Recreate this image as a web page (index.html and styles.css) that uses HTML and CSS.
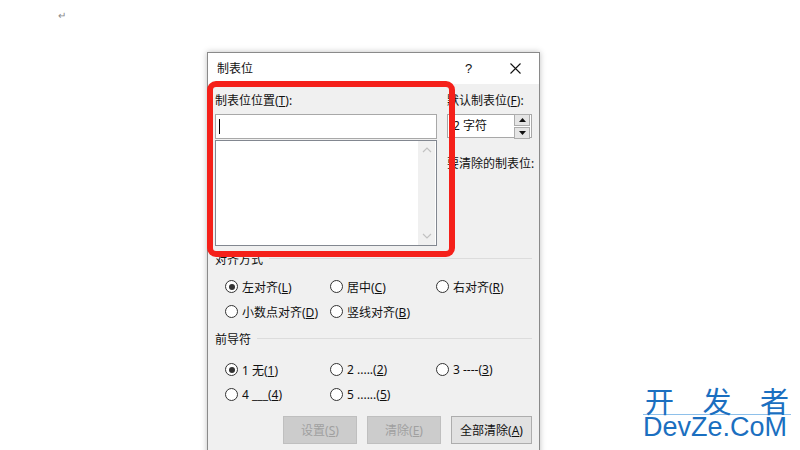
FILE: index.html
```html
<!DOCTYPE html>
<html lang="zh-CN">
<head>
  <meta charset="UTF-8" />
  <title>制表位</title>
  <link rel="stylesheet" href="styles.css">
</head>
<body>
  <div class="page">
    <span class="para-mark">↵</span>

    <div class="dialog">
      <div class="titlebar">
        <span class="title">制表位</span>
        <span class="help">?</span>
        <span class="close">
          <svg width="11" height="11" viewBox="0 0 11 11"><path d="M0.5 0.5 L10.5 10.5 M10.5 0.5 L0.5 10.5" stroke="#111" stroke-width="1.1"/></svg>
        </span>
      </div>

      <div class="content">
        <div class="top">
          <div class="col-left">
            <div class="label">制表位位置(<u>T</u>):</div>
            <div class="input"><span class="caret"></span></div>
            <div class="listbox">
              <div class="scroll">
                <svg width="10" height="6" viewBox="0 0 10 6"><path d="M1 5 L5 1 L9 5" fill="none" stroke="#c2c2c2" stroke-width="1.2"/></svg>
                <svg width="10" height="6" viewBox="0 0 10 6"><path d="M1 1 L5 5 L9 1" fill="none" stroke="#c2c2c2" stroke-width="1.2"/></svg>
              </div>
            </div>
          </div>
          <div class="col-right">
            <div class="label">默认制表位(<u>F</u>):</div>
            <div class="spinner">
              <span class="spin-value">2 字符</span>
              <div class="spin-btns">
                <div class="spin-btn"><svg width="7" height="4" viewBox="0 0 7 4"><path d="M0 4 L3.5 0 L7 4 Z" fill="#111"/></svg></div>
                <div class="spin-btn"><svg width="7" height="4" viewBox="0 0 7 4"><path d="M0 0 L3.5 4 L7 0 Z" fill="#111"/></svg></div>
              </div>
            </div>
            <div class="label clear-label">要清除的制表位:</div>
          </div>
        </div>

        <div class="group-head first"><span>对齐方式</span><i></i></div>
        <div class="radios">
          <label class="radio checked"><b></b><span>左对齐(<u>L</u>)</span></label>
          <label class="radio"><b></b><span>居中(<u>C</u>)</span></label>
          <label class="radio"><b></b><span>右对齐(<u>R</u>)</span></label>
          <label class="radio"><b></b><span>小数点对齐(<u>D</u>)</span></label>
          <label class="radio"><b></b><span>竖线对齐(<u>B</u>)</span></label>
        </div>

        <div class="group-head second"><span>前导符</span><i></i></div>
        <div class="radios leaders">
          <label class="radio checked"><b></b><span>1 无(<u>1</u>)</span></label>
          <label class="radio"><b></b><span>2 .....(<u>2</u>)</span></label>
          <label class="radio"><b></b><span>3 ----(<u>3</u>)</span></label>
          <label class="radio"><b></b><span>4 ___(<u>4</u>)</span></label>
          <label class="radio"><b></b><span>5 ......(<u>5</u>)</span></label>
        </div>

        <div class="buttons">
          <button class="btn" disabled>设置(<u>S</u>)</button>
          <button class="btn" disabled>清除(<u>E</u>)</button>
          <button class="btn wide">全部清除(<u>A</u>)</button>
        </div>
      </div>
    </div>

    <!-- annotation box drawn over the dialog -->
    <div class="highlight"></div>

    <div class="watermark">
      <div class="wm-cn"><span>开</span><span>发</span><span>者</span></div>
      <div class="wm-line"></div>
      <div class="wm-en">DevZe.CoM</div>
    </div>
  </div>
</body>
</html>
```

FILE: styles.css
```css
body {
  margin: 0;
  background: #fff;
  font-family: "Noto Sans", "Noto Sans CJK SC", sans-serif;
  font-size: 12px;
  color: #111;
}

.page {
  position: relative;
  width: 800px;
  height: 450px;
  overflow: hidden;
}

.para-mark {
  position: absolute;
  left: 58px;
  top: 8px;
  font-size: 10px;
  color: #8a8a8a;
}

/* dialog window */
.dialog {
  position: absolute;
  left: 207px;
  top: 52px;
  width: 333px;
  height: 420px;
  box-sizing: border-box;
  background: #f0f0f0;
  border: 1px solid #8a8a8a;
  box-shadow: 0 0 6px rgba(0, 0, 0, 0.25);
}

.titlebar {
  height: 31px;
  background: #fff;
  display: flex;
  align-items: center;
  padding-left: 9px;
}

.title {
  line-height: 16px;
}

.help {
  margin-left: auto;
  width: 10px;
  font-family: "Liberation Sans", sans-serif;
  font-size: 13px;
}

.close {
  display: flex;
  margin: 0 18px 0 35px;
}

.content {
  padding: 9px 7px 0 7px;
}

.top {
  display: flex;
  gap: 10px;
}

.col-left {
  width: 222px;
}

.col-right {
  width: 85px;
}

.label {
  line-height: 16px;
  height: 16px;
  margin-bottom: 5px;
  white-space: nowrap;
}

.input {
  height: 25px;
  box-sizing: border-box;
  background: #fff;
  border: 1px solid #a8a8a8;
  padding: 4px 3px;
}

.caret {
  display: block;
  width: 1px;
  height: 15px;
  background: #000;
}

.listbox {
  height: 106px;
  margin-top: 1px;
  box-sizing: border-box;
  background: #fff;
  border: 1px solid #828790;
  display: flex;
  justify-content: flex-end;
}

.scroll {
  width: 17px;
  margin-right: 1px;
  background: #f0f0f0;
  display: flex;
  flex-direction: column;
  justify-content: space-between;
  align-items: center;
  padding: 6px 0;
}

.spinner {
  height: 24px;
  width: 85px;
  box-sizing: border-box;
  background: #fff;
  border: 1px solid #a8a8a8;
  display: flex;
  align-items: center;
  justify-content: space-between;
  padding-left: 5px;
}

.spin-value {
  line-height: 16px;
}

.spin-btns {
  display: flex;
  flex-direction: column;
  gap: 1px;
  padding-right: 1px;
}

.spin-btn {
  width: 14px;
  height: 10px;
  background: #e5e5e5;
  border: 1px solid #adadad;
  display: flex;
  align-items: center;
  justify-content: center;
}

.clear-label {
  margin-top: 18px;
}

/* groups */
.group-head {
  display: flex;
  align-items: center;
  line-height: 16px;
  gap: 6px;
}

.group-head i {
  flex: 1;
  height: 1px;
  background: #dcdcdc;
  margin-top: -3px;
}

.group-head.first {
  margin-top: 6px;
}

.group-head.second {
  margin-top: 8px;
}

.radios {
  display: grid;
  grid-template-columns: 105px 106px auto;
  grid-auto-rows: 25px;
  padding-left: 10px;
  margin-top: 6px;
}

.radios.leaders {
  margin-top: 9px;
}

.radio {
  display: flex;
  align-items: center;
  gap: 4px;
  white-space: nowrap;
}

.radio b {
  width: 11px;
  height: 11px;
  border: 1px solid #333;
  border-radius: 50%;
  background: #fff;
  display: flex;
  align-items: center;
  justify-content: center;
}

.radio.checked b::after {
  content: "";
  width: 6px;
  height: 6px;
  border-radius: 50%;
  background: #333;
}

.buttons {
  display: flex;
  justify-content: flex-end;
  gap: 10px;
  margin-top: 9px;
}

.btn {
  width: 74px;
  height: 28px;
  font: inherit;
  color: #111;
  background: #e1e1e1;
  border: 1px solid #adadad;
  padding: 0;
}

.btn.wide {
  width: 81px;
}

.btn:disabled {
  background: #cccccc;
  border-color: #bfbfbf;
  color: #a0a0a0;
}

/* red annotation */
.highlight {
  position: absolute;
  left: 207px;
  top: 81px;
  width: 248px;
  height: 176px;
  box-sizing: border-box;
  border: 6px solid #f5201a;
  border-radius: 9px;
}

/* watermark */
.watermark {
  position: absolute;
  left: 643px;
  top: 386px;
  width: 148px;
  color: #1b6fc0;
}

.wm-cn {
  display: flex;
  justify-content: space-between;
  font-family: "Noto Sans CJK SC", sans-serif;
  font-size: 29px;
  line-height: 28px;
  height: 28px;
  padding: 0 2px;
}

.wm-line {
  height: 1px;
  background: #8ec0ea;
}

.wm-en {
  font-family: "Liberation Sans", sans-serif;
  font-size: 27px;
  line-height: 24px;
  white-space: nowrap;
}
```
